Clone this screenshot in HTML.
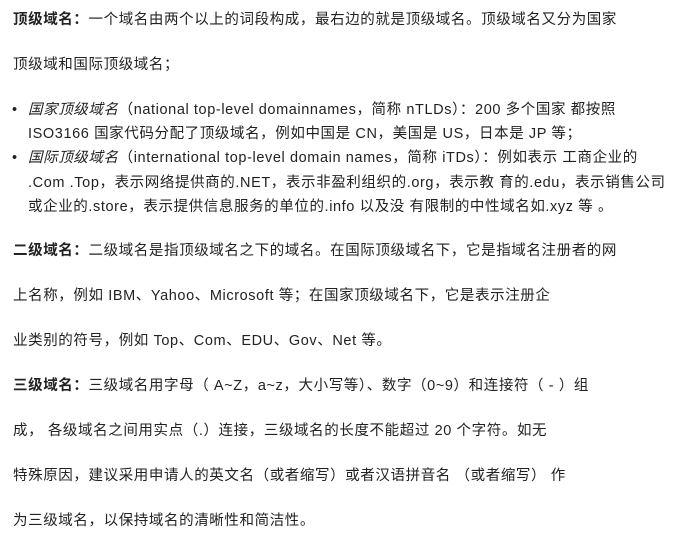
<!DOCTYPE html>
<html><head><meta charset="utf-8"><style>
body{margin:0;width:678px;height:536px;background:#fff;overflow:hidden;font-family:"Liberation Sans","Noto Sans CJK SC",sans-serif;font-size:14.5px;letter-spacing:0.6px;color:#222;}
.l{position:absolute;white-space:nowrap;line-height:20px;}
b{font-weight:bold;}
i{font-style:italic;}
</style></head><body>
<div class="l" style="left:13px;top:10px"><b>顶级域名：</b>一个域名由两个以上的词段构成，最右边的就是顶级域名。顶级域名又分为国家</div>
<div class="l" style="left:13px;top:55px">顶级域和国际顶级域名；</div>
<div class="l" style="left:12px;top:100px">•</div>
<div class="l" style="left:28px;top:100px"><i>国家顶级域名</i>（national top-level domainnames，简称 nTLDs）：200 多个国家 都按照</div>
<div class="l" style="left:28px;top:124px">ISO3166 国家代码分配了顶级域名，例如中国是 CN，美国是 US，日本是 JP 等；</div>
<div class="l" style="left:12px;top:148px">•</div>
<div class="l" style="left:28px;top:148px"><i>国际顶级域名</i>（international top-level domain names，简称 iTDs）：例如表示 工商企业的</div>
<div class="l" style="left:28px;top:173px">.Com .Top，表示网络提供商的.NET，表示非盈利组织的.org，表示教 育的.edu，表示销售公司</div>
<div class="l" style="left:28px;top:197px">或企业的.store，表示提供信息服务的单位的.info 以及没 有限制的中性域名如.xyz 等 。</div>
<div class="l" style="left:13px;top:241px"><b>二级域名：</b>二级域名是指顶级域名之下的域名。在国际顶级域名下，它是指域名注册者的网</div>
<div class="l" style="left:13px;top:286px">上名称，例如 IBM、Yahoo、Microsoft 等；在国家顶级域名下，它是表示注册企</div>
<div class="l" style="left:13px;top:331px">业类别的符号，例如 Top、Com、EDU、Gov、Net 等。</div>
<div class="l" style="left:13px;top:376px"><b>三级域名：</b>三级域名用字母（ A~Z，a~z，大小写等）、数字（0~9）和连接符（ - ）组</div>
<div class="l" style="left:13px;top:421px">成， 各级域名之间用实点（.）连接，三级域名的长度不能超过 20 个字符。如无</div>
<div class="l" style="left:13px;top:466px">特殊原因，建议采用申请人的英文名（或者缩写）或者汉语拼音名 （或者缩写） 作</div>
<div class="l" style="left:13px;top:511px">为三级域名，以保持域名的清晰性和简洁性。</div>
</body></html>
